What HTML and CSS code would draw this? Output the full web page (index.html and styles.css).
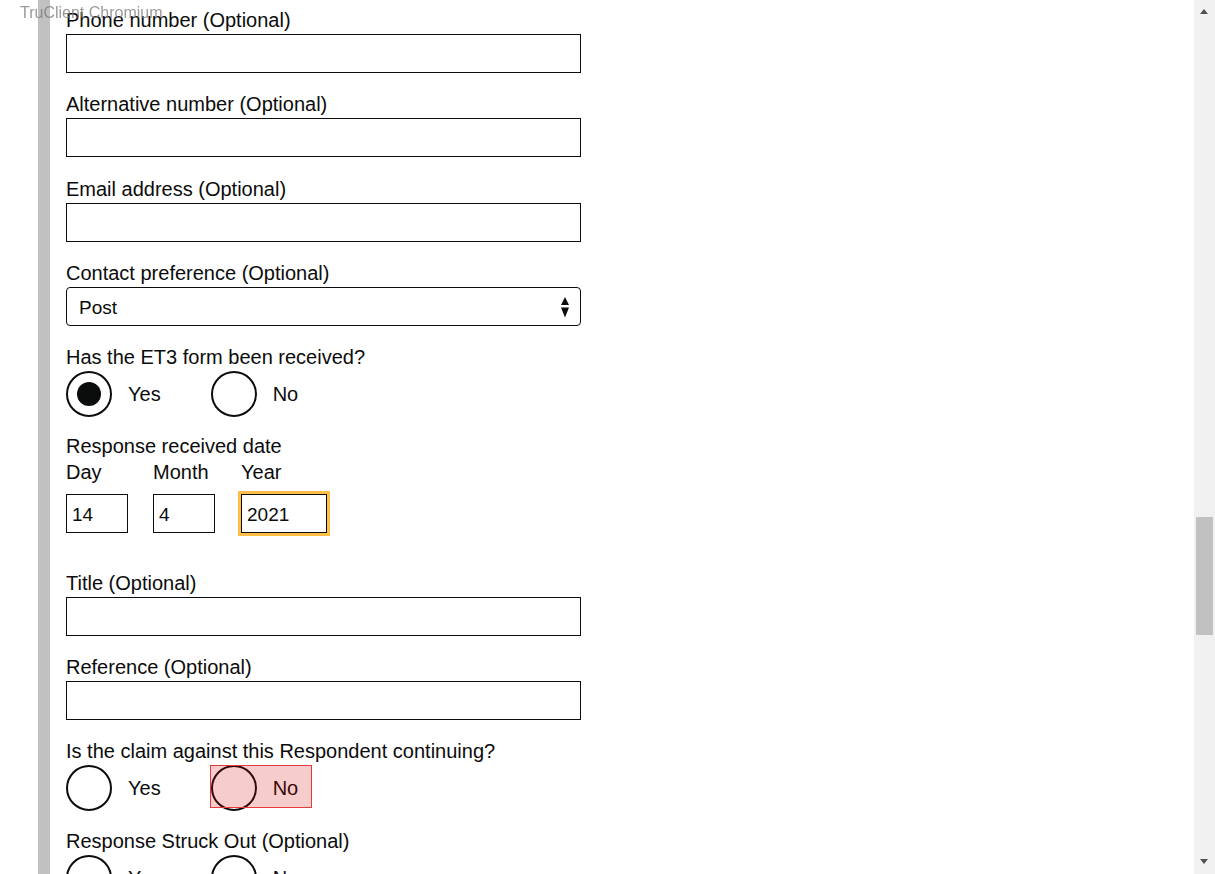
FILE: index.html
```html
<!DOCTYPE html>
<html lang="en">
<head>
<meta charset="utf-8">
<title>Respondent details</title>
<link rel="stylesheet" href="styles.css">
</head>
<body>
<div class="tool-label">TruClient Chromium</div>
<div class="window">
  <div class="gutter"></div>
  <div class="rail"></div>
  <main class="content">
    <div class="group">
      <label class="label">Phone number (Optional)</label>
      <input class="input" type="text">
    </div>
    <div class="group">
      <label class="label">Alternative number (Optional)</label>
      <input class="input" type="text">
    </div>
    <div class="group">
      <label class="label">Email address (Optional)</label>
      <input class="input" type="text">
    </div>
    <div class="group">
      <label class="label">Contact preference (Optional)</label>
      <div class="select-wrap">
        <select class="select"><option>Post</option></select>
        <svg class="select-arrow" width="8" height="21" viewBox="0 0 8 21"><polygon points="0,8 4,0 8,8" fill="#0b0c0c"/><polygon points="0,10.5 8,10.5 4,20.5" fill="#0b0c0c"/></svg>
      </div>
    </div>
    <div class="radio-group">
      <div class="label">Has the ET3 form been received?</div>
      <div class="radios">
        <div class="radio"><span class="radio-circle checked"></span><span class="radio-text">Yes</span></div>
        <div class="radio"><span class="radio-circle"></span><span class="radio-text">No</span></div>
      </div>
    </div>
    <div class="date-group">
      <div class="label">Response received date</div>
      <div class="date-fields">
        <div class="date-item day"><label class="label date-label">Day</label><input class="input date-input" type="text" value="14"></div>
        <div class="date-item month"><label class="label date-label">Month</label><input class="input date-input" type="text" value="4"></div>
        <div class="date-item year"><label class="label date-label">Year</label><input class="input date-input focused" type="text" value="2021"></div>
      </div>
    </div>
    <div class="group">
      <label class="label">Title (Optional)</label>
      <input class="input" type="text">
    </div>
    <div class="group">
      <label class="label">Reference (Optional)</label>
      <input class="input" type="text">
    </div>
    <div class="radio-group claim">
      <div class="label">Is the claim against this Respondent continuing?</div>
      <div class="radios">
        <div class="radio"><span class="radio-circle"></span><span class="radio-text">Yes</span></div>
        <div class="radio highlighted"><span class="radio-circle"></span><span class="radio-text">No</span><span class="highlight"></span></div>
      </div>
    </div>
    <div class="radio-group">
      <div class="label">Response Struck Out (Optional)</div>
      <div class="radios">
        <div class="radio"><span class="radio-circle"></span><span class="radio-text">Yes</span></div>
        <div class="radio"><span class="radio-circle"></span><span class="radio-text">No</span></div>
      </div>
    </div>
  </main>
  <div class="scrollbar">
    <div class="sb-button"><span class="sb-arrow up"></span></div>
    <div class="sb-track"><div class="sb-thumb"></div></div>
    <div class="sb-button"><span class="sb-arrow down"></span></div>
  </div>
</div>
</body>
</html>
```
FILE: styles.css
```css
html, body {
  margin: 0;
  padding: 0;
  background: #ffffff;
}
body {
  font-family: "Liberation Sans", Arial, sans-serif;
  color: #0b0c0c;
  overflow: hidden;
}
.tool-label {
  position: fixed;
  left: 20px;
  top: 4px;
  font-size: 16px;
  line-height: 18px;
  color: rgba(120, 120, 120, 0.75);
  z-index: 5;
  pointer-events: none;
}
.window {
  display: flex;
  height: 874px;
  overflow: hidden;
}
.gutter {
  width: 38px;
  flex: none;
}
.rail {
  width: 12px;
  flex: none;
  background: #c1c1c1;
}
.content {
  flex: 1;
  padding: 8px 0 0 16px;
  overflow: hidden;
}
.label {
  display: block;
  font-size: 20px;
  line-height: 25px;
  margin-bottom: 1px;
}
.group {
  margin-bottom: 19.33px;
}
.input {
  display: block;
  box-sizing: border-box;
  width: 515px;
  height: 39px;
  margin: 0;
  border: 1px solid #0b0c0c;
  border-radius: 0;
  padding: 3px 6px 0 6px;
  font-family: "Liberation Sans", Arial, sans-serif;
  font-size: 19px;
  color: #0b0c0c;
  background: #fff;
  outline: none;
}
.select-wrap {
  position: relative;
  width: 515px;
}
.select {
  display: block;
  box-sizing: border-box;
  width: 515px;
  height: 39px;
  margin: 0;
  -webkit-appearance: none;
  appearance: none;
  border: 1px solid #0b0c0c;
  border-radius: 4px;
  padding: 3px 12px 0 12px;
  font-family: "Liberation Sans", Arial, sans-serif;
  font-size: 19px;
  color: #0b0c0c;
  background: #fff;
}
.select-arrow {
  position: absolute;
  right: 12.5px;
  top: 10px;
  pointer-events: none;
}
.radio-group {
  margin-bottom: 17px;
}
.radio-group.claim {
  margin-bottom: 18px;
}
.radios {
  display: flex;
}
.radio {
  position: relative;
  display: flex;
  align-items: center;
  height: 46px;
  margin-right: 35px;
}
.radio-circle {
  box-sizing: border-box;
  width: 46px;
  height: 46px;
  border: 2px solid #0b0c0c;
  border-radius: 50%;
  display: flex;
  align-items: center;
  justify-content: center;
  flex: none;
}
.radio-circle.checked::after {
  content: "";
  width: 24px;
  height: 24px;
  border-radius: 50%;
  background: #0b0c0c;
}
.radio-text {
  font-size: 20px;
  line-height: 25px;
  padding: 0 15px 0 16px;
}
.highlight {
  position: absolute;
  left: -1px;
  top: 0;
  width: 102px;
  height: 43px;
  box-sizing: border-box;
  background: rgba(215, 0, 0, 0.2);
  border: 1px solid #e23c3c;
}
.date-group {
  margin-bottom: 38px;
}
.date-fields {
  display: flex;
}
.date-item.day {
  margin-right: 25px;
}
.date-item.month {
  margin-right: 26px;
}
.date-label {
  margin-bottom: 8.2px;
}
.date-input {
  padding: 3px 5px 0 5px;
}
.day .date-input {
  width: 62px;
}
.month .date-input {
  width: 62px;
}
.year .date-input {
  width: 86px;
}
.date-input.focused {
  outline: 3px solid #ffbf47;
  outline-offset: 0;
}
.scrollbar {
  width: 21px;
  flex: none;
  background: #f1f1f1;
  display: flex;
  flex-direction: column;
}
.sb-button {
  height: 21px;
  flex: none;
  position: relative;
}
.sb-arrow {
  position: absolute;
  left: 6px;
  width: 0;
  height: 0;
  border-left: 4.5px solid transparent;
  border-right: 4.5px solid transparent;
}
.sb-arrow.up {
  top: 9px;
  border-bottom: 5px solid #505050;
}
.sb-arrow.down {
  top: 6px;
  border-top: 5px solid #505050;
}
.sb-track {
  flex: 1;
}
.sb-thumb {
  margin: 496px 2px 0 2px;
  height: 118px;
  background: #c1c1c1;
}
```
